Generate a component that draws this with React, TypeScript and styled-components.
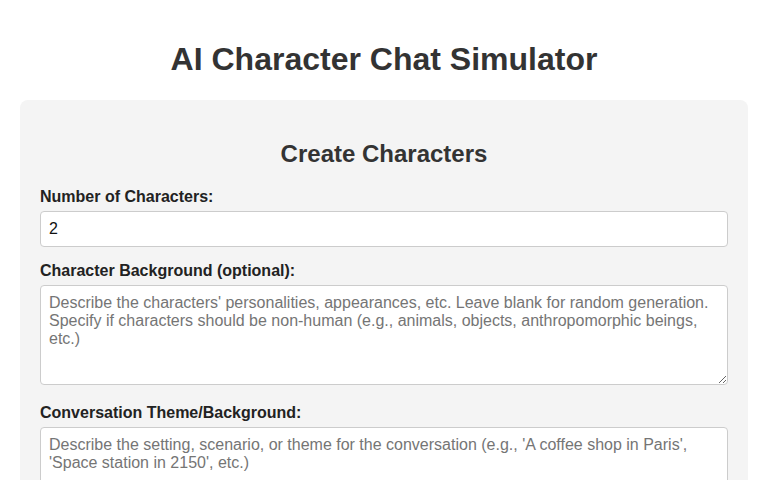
import React, { useState } from "react";
import styled, { createGlobalStyle } from "styled-components";

const GlobalStyle = createGlobalStyle`
  body {
    margin: 0;
    padding: 20px;
    font-family: "Liberation Sans", Arial, sans-serif;
    background: #fff;
    color: #333;
  }
`;

const Title = styled.h1`
  text-align: center;
  font-size: 32px;
  margin: 0.67em 0;
  color: #333;
`;

const Card = styled.section`
  background: #f4f4f4;
  border-radius: 8px;
  padding: 20px;
  max-width: 800px;
  margin: 0 auto;
`;

const Heading = styled.h2`
  text-align: center;
  font-size: 24px;
  margin: 0.83em 0;
  color: #333;
`;

const Group = styled.div`
  margin-bottom: 15px;
`;

const Label = styled.label`
  display: block;
  font-weight: bold;
  font-size: 16px;
  margin-bottom: 5px;
  color: #222;
`;

const field = `
  width: 100%;
  box-sizing: border-box;
  padding: 8px;
  border: 1px solid #ccc;
  border-radius: 4px;
  font-family: "Liberation Sans", Arial, sans-serif;
  font-size: 16px;
  background: #fff;
  color: #111;
  &::placeholder {
    color: #757575;
  }
`;

const Input = styled.input`
  ${field}
  height: 36px;
`;

const TextArea = styled.textarea<{ $h: number }>`
  ${field}
  height: ${(p) => p.$h}px;
`;

export default function App() {
  const [count, setCount] = useState("2");
  const [bg, setBg] = useState("");
  const [theme, setTheme] = useState("");

  return (
    <>
      <GlobalStyle />
      <Title>AI Character Chat Simulator</Title>
      <Card>
        <Heading>Create Characters</Heading>
        <Group>
          <Label htmlFor="count">Number of Characters:</Label>
          <Input
            id="count"
            type="text"
            value={count}
            onChange={(e) => setCount(e.target.value)}
          />
        </Group>
        <Group>
          <Label htmlFor="bg">Character Background (optional):</Label>
          <TextArea
            id="bg"
            $h={100}
            value={bg}
            onChange={(e) => setBg(e.target.value)}
            placeholder="Describe the characters' personalities, appearances, etc. Leave blank for random generation. Specify if characters should be non-human (e.g., animals, objects, anthropomorphic beings, etc.)"
          />
        </Group>
        <Group>
          <Label htmlFor="theme">Conversation Theme/Background:</Label>
          <TextArea
            id="theme"
            $h={100}
            value={theme}
            onChange={(e) => setTheme(e.target.value)}
            placeholder="Describe the setting, scenario, or theme for the conversation (e.g., 'A coffee shop in Paris', 'Space station in 2150', etc.)"
          />
        </Group>
      </Card>
    </>
  );
}
